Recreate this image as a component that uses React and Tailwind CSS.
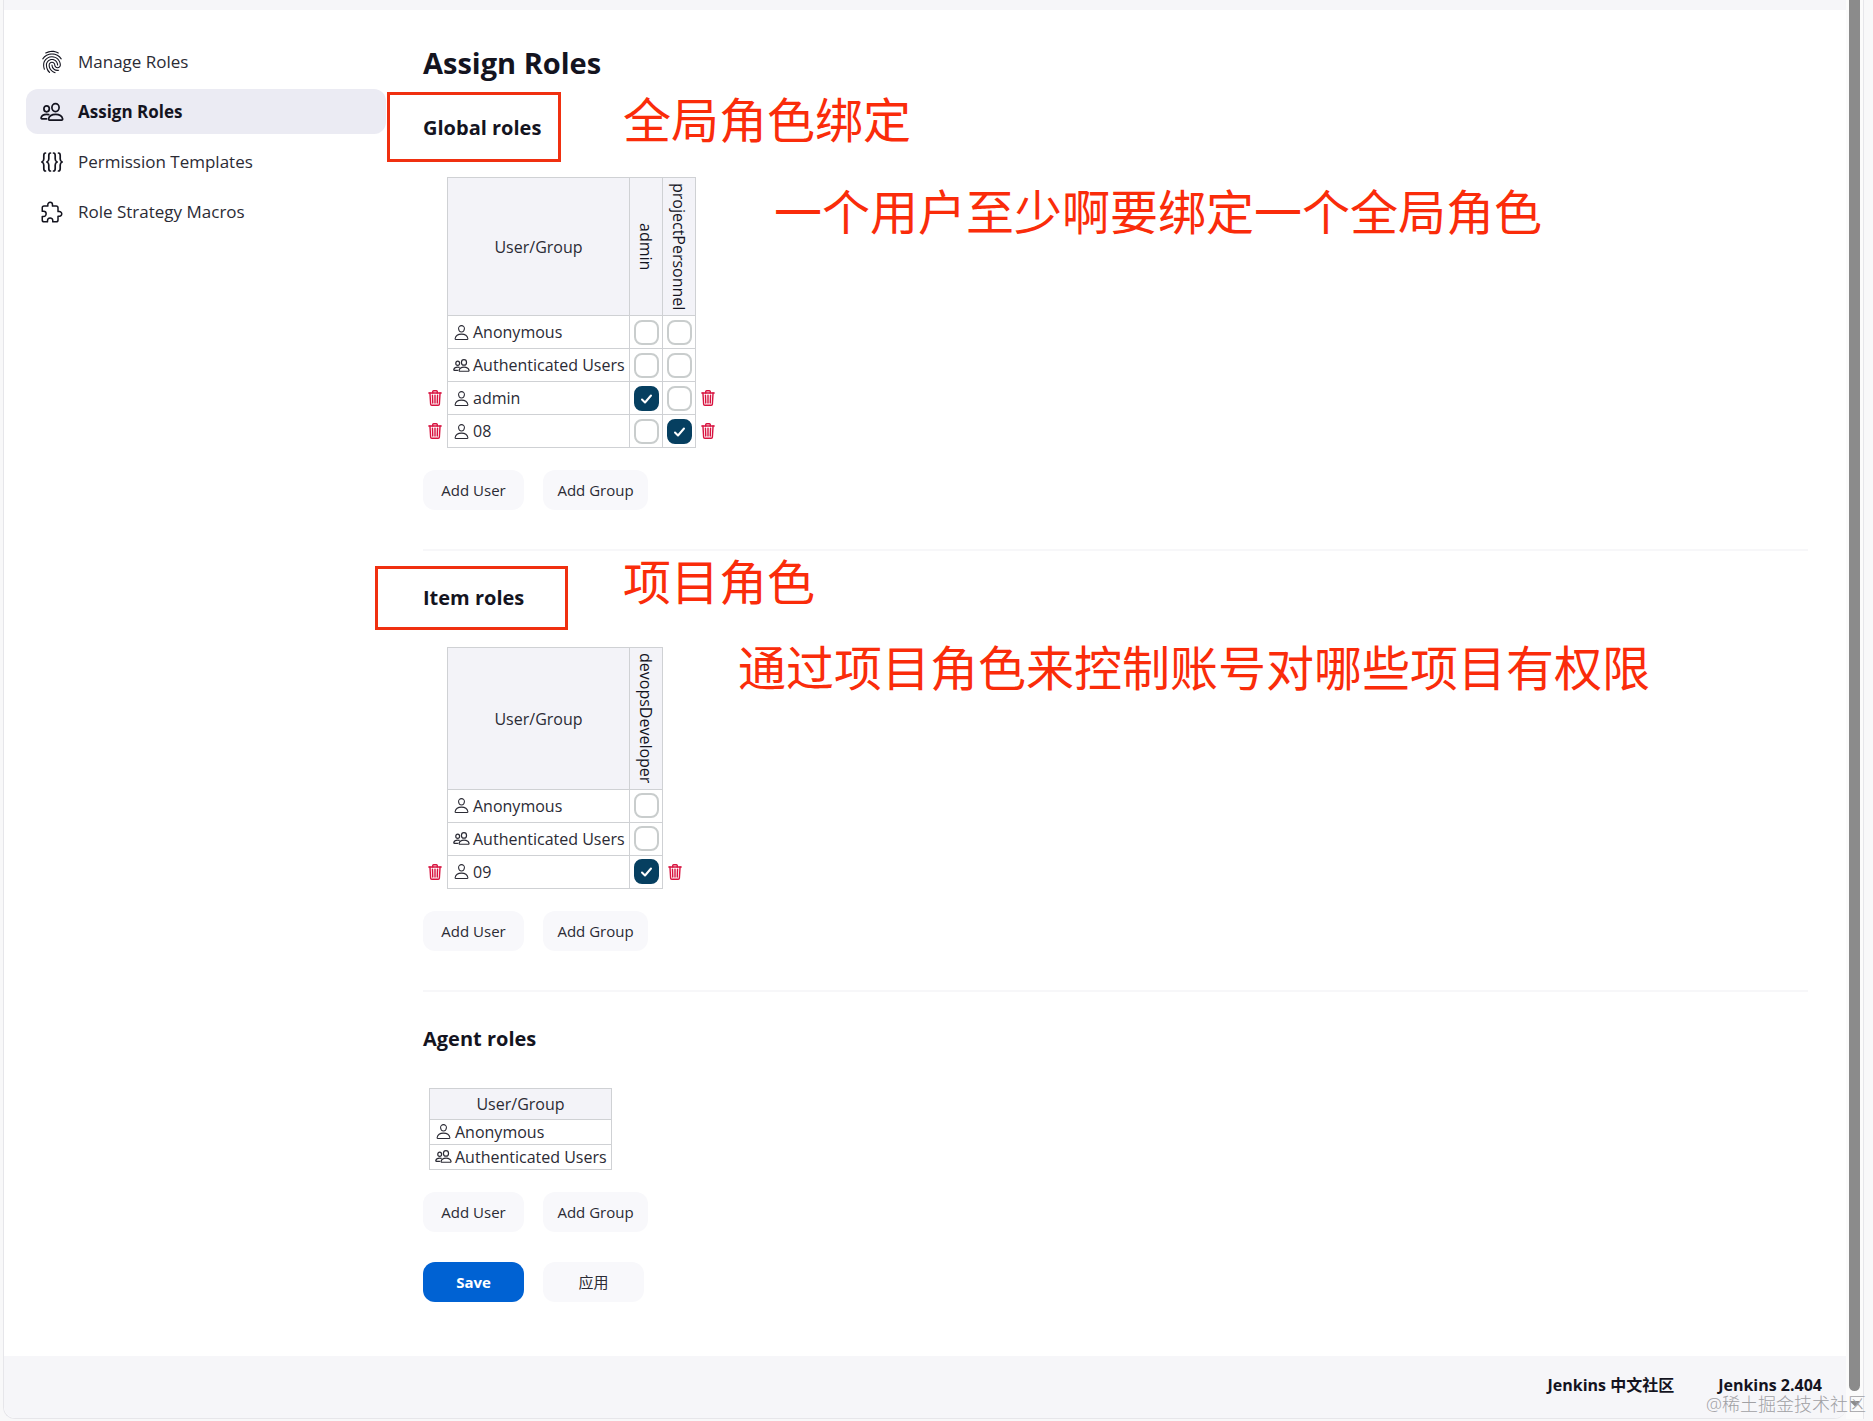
import React from "react";
import {
  IoExtensionPuzzleOutline,
  IoFingerPrintOutline,
  IoPersonOutline,
  IoTrashOutline,
} from "react-icons/io5";
import { FaCaretDown } from "react-icons/fa";

const BracesIcon = ({ className }) => (
  <svg
    className={className}
    viewBox="0 0 24 24"
    fill="none"
    stroke="currentColor"
    strokeWidth="1.7"
    strokeLinecap="round"
    strokeLinejoin="round"
  >
    <path d="M5.500 3C3.800 3 3.800 4 3.800 5.500V9c0 1.800-.6 2.500-2 3 1.400.5 2 1.200 2 3v3.500c0 1.500 0 2.500 1.700 2.500" />
    <path d="M10.500 3C8.800 3 8.800 4 8.800 5.500V9c0 1.800-.6 2.500-2 3 1.400.5 2 1.200 2 3v3.500c0 1.500 0 2.500 1.700 2.500" />
    <path d="M13.500 3c1.700 0 1.700 1 1.700 2.500V9c0 1.800.6 2.500 2 3-1.400.5-2 1.200-2 3v3.500c0 1.500 0 2.500-1.700 2.500" />
    <path d="M18.500 3c1.700 0 1.700 1 1.700 2.500V9c0 1.800.6 2.500 2 3-1.400.5-2 1.200-2 3v3.500c0 1.500 0 2.500-1.700 2.500" />
  </svg>
);

const PeopleIcon = ({ className }) => (
  <svg
    className={className}
    viewBox="0 0 24 24"
    fill="none"
    stroke="currentColor"
    strokeWidth="1.7"
    strokeLinecap="round"
    strokeLinejoin="round"
  >
    <ellipse cx="15.500" cy="7.600" rx="3.600" ry="4" />
    <path d="M15.600 14.300c-3.500 0-6.400 1.900-7 4.400-.2.800.2 1.400 1 1.400h12c.8 0 1.200-.6 1-1.400-.6-2.500-3.500-4.400-7-4.400z" />
    <ellipse cx="6.600" cy="8.800" rx="2.700" ry="3" />
    <path d="M8.800 14.600c-.7-.2-1.400-.3-2.200-.3-2.800 0-5 1.400-5.500 3.400-.1.600.2 1.100.8 1.100h4.600" />
  </svg>
);

const menu = [
  { label: "Manage Roles", icon: IoFingerPrintOutline },
  { label: "Assign Roles", icon: PeopleIcon, active: true },
  { label: "Permission Templates", icon: BracesIcon },
  { label: "Role Strategy Macros", icon: IoExtensionPuzzleOutline },
];

const globalRows = [
  { name: "Anonymous", checked: [] },
  { name: "Authenticated Users", group: true, checked: [] },
  { name: "admin", checked: ["admin"], removable: true },
  { name: "08", checked: ["projectPersonnel"], removable: true },
];

const itemRows = [
  { name: "Anonymous", checked: [] },
  { name: "Authenticated Users", group: true, checked: [] },
  { name: "09", checked: ["devopsDeveloper"], removable: true },
];

const agentRows = [
  { name: "Anonymous", checked: [] },
  { name: "Authenticated Users", group: true, checked: [] },
];

const Sidebar = () => (
  <nav className="flex w-[360px] shrink-0 flex-col gap-[5px] text-[17px]">
    {menu.map(({ label, icon: Icon, active }) => (
      <a
        key={label}
        href="#"
        className={
          active
            ? "flex h-[45px] items-center gap-[14px] rounded-xl bg-[#ebebf3] px-[14px] font-bold text-[#14141f]"
            : "flex h-[45px] items-center gap-[14px] rounded-xl px-[14px]"
        }
      >
        <Icon className="size-6 text-[#14141f]" />
        {label}
      </a>
    ))}
  </nav>
);

const RoleCheckbox = ({ label, checked }) => (
  <label className="relative mx-auto block size-[25px]">
    <input
      type="checkbox"
      defaultChecked={checked}
      aria-label={label}
      className="peer block size-[25px] appearance-none rounded-lg border-2 border-[#c9cdcd] bg-white checked:border-[#063f60] checked:bg-[#063f60]"
    />
    <svg
      className="pointer-events-none absolute inset-0 hidden size-[25px] peer-checked:block"
      viewBox="0 0 25 25"
      fill="none"
      stroke="white"
      strokeWidth="2"
      strokeLinecap="round"
      strokeLinejoin="round"
    >
      <path d="M8 13.500l3 3 6-7" />
    </svg>
  </label>
);

const RemoveButton = ({ name }) => (
  <button
    type="button"
    aria-label={`Remove ${name}`}
    className="flex w-6 items-center justify-center text-[#d8123f]"
  >
    <IoTrashOutline size={18} className="[&_path]:[stroke-width:40px]" />
  </button>
);

const RoleTable = ({ roles, rows, compact }) => (
  <table className="border-collapse leading-6">
    <thead>
      <tr className={compact ? "h-[31px]" : ""}>
        {!compact && <td />}
        <th className="w-[182px] border border-[#cfd1d4] bg-[#f3f3f8] p-0 font-normal">
          User/Group
        </th>
        {roles.map((role) => (
          <th
            key={role}
            className="w-[33px] border border-[#cfd1d4] bg-[#f3f3f8] px-0 py-[5px] text-center font-medium text-[#14141f]"
          >
            <span className="inline-block whitespace-nowrap align-middle [writing-mode:vertical-rl]">
              {role}
            </span>
          </th>
        ))}
        {!compact && <td />}
      </tr>
    </thead>
    <tbody>
      {rows.map((row) => (
        <tr key={row.name} className={compact ? "" : "h-[33px]"}>
          {!compact && (
            <td className="w-6 p-0">
              {row.removable && <RemoveButton name={row.name} />}
            </td>
          )}
          <td className="border border-[#cfd1d4] p-0 pl-[5px]">
            <span className="flex items-center gap-[3px] whitespace-nowrap">
              {row.group ? (
                <PeopleIcon className="size-[17px]" />
              ) : (
                <IoPersonOutline size={17} />
              )}
              {row.name}
            </span>
          </td>
          {roles.map((role) => (
            <td key={role} className="border border-[#cfd1d4] p-0">
              <RoleCheckbox
                label={`${row.name}: ${role}`}
                checked={row.checked.includes(role)}
              />
            </td>
          ))}
          {!compact && (
            <td className="w-6 p-0">
              {row.removable && <RemoveButton name={row.name} />}
            </td>
          )}
        </tr>
      ))}
    </tbody>
  </table>
);

const AddButtons = () => (
  <div className="mt-[22px] flex gap-[19px] text-[15px]">
    <button type="button" className="h-10 w-[101px] rounded-xl bg-[#f8f8fb]">
      Add User
    </button>
    <button type="button" className="h-10 w-[105px] rounded-xl bg-[#f8f8fb]">
      Add Group
    </button>
  </div>
);

const Note = ({ className, children }) => (
  <p
    className={`absolute whitespace-nowrap text-5xl text-[#fa2c0a] ${className}`}
  >
    {children}
  </p>
);

const App = () => {
  return (
    <div className="flex min-h-screen bg-[#f8f8f9] pb-[2px] pl-[3px] font-['Open_Sans','Noto_Sans_CJK_SC',sans-serif] text-base text-[#2b2b35]">
      <div className="flex flex-1 flex-col rounded-b-xl border-b border-l border-[#e6e6ea] bg-white">
        <div className="h-[10px] bg-[#f6f6f9]" />

        <div className="flex flex-1 gap-[37px] pl-[22px] pr-[38px] pt-[29px]">
          <Sidebar />

          <main className="relative flex-1 pb-[54px] pt-[2px]">
            <h1 className="text-[29px] font-bold leading-[44px] text-[#14141f]">
              Assign Roles
            </h1>

            <section>
              <h2 className="relative mt-[29px] w-fit text-xl font-bold leading-7 text-[#14141f]">
                Global roles
                <span className="absolute -bottom-5 -left-9 -right-5 -top-[22px] border-3 border-[#f03010]" />
              </h2>
              <div className="mt-[35px]">
                <RoleTable roles={["admin", "projectPersonnel"]} rows={globalRows} />
              </div>
              <AddButtons />
            </section>

            <section className="mt-[39px] border-t-2 border-[#f7f7f9]">
              <h2 className="relative mt-[33px] w-fit text-xl font-bold leading-7 text-[#14141f]">
                Item roles
                <span className="absolute -bottom-[18px] -left-12 -right-11 -top-[18px] border-3 border-[#f03010]" />
              </h2>
              <div className="mt-[35px]">
                <RoleTable roles={["devopsDeveloper"]} rows={itemRows} />
              </div>
              <AddButtons />
            </section>

            <section className="mt-[39px] border-t-2 border-[#f7f7f9]">
              <h2 className="mt-[33px] text-xl font-bold leading-7 text-[#14141f]">
                Agent roles
              </h2>
              <div className="ml-[6px] mt-[35px]">
                <RoleTable roles={[]} rows={agentRows} compact />
              </div>
              <AddButtons />
            </section>

            <div className="mt-[30px] flex gap-[19px] text-[15px]">
              <button
                type="submit"
                className="h-10 w-[101px] rounded-xl bg-[#0062d3] font-bold text-white"
              >
                Save
              </button>
              <button
                type="button"
                className="h-10 w-[101px] rounded-xl bg-[#f8f8fb]"
              >
                应用
              </button>
            </div>

            <Note className="left-[200px] top-[57px]">全局角色绑定</Note>
            <Note className="left-[351px] top-[149px]">
              一个用户至少啊要绑定一个全局角色
            </Note>
            <Note className="left-[200px] top-[519px]">项目角色</Note>
            <Note className="left-[315px] top-[605px]">
              通过项目角色来控制账号对哪些项目有权限
            </Note>
          </main>
        </div>

        <footer className="relative flex h-[62px] items-center justify-end gap-11 rounded-b-xl bg-[#f6f6f9] pb-1 pr-6 font-bold leading-4 text-[#14141f]">
          <a href="#">Jenkins 中文社区</a>
          <a href="#">Jenkins 2.404</a>
          <span className="absolute -right-5 bottom-1 whitespace-nowrap text-lg font-light leading-5 text-[#a0a0a4]">
            @稀土掘金技术社区
          </span>
        </footer>
      </div>

      <div className="flex w-[18px] flex-col items-center border-r border-[#e6e6ea] bg-[#fbfbfb]">
        <div className="w-[11px] flex-1 rounded-b-full bg-[#8b8b8b]" />
        <FaCaretDown size={16} className="mb-2 mt-1 text-[#8b8b8b]" />
      </div>
      <div className="w-[9px]" />
    </div>
  );
};

export default App;
